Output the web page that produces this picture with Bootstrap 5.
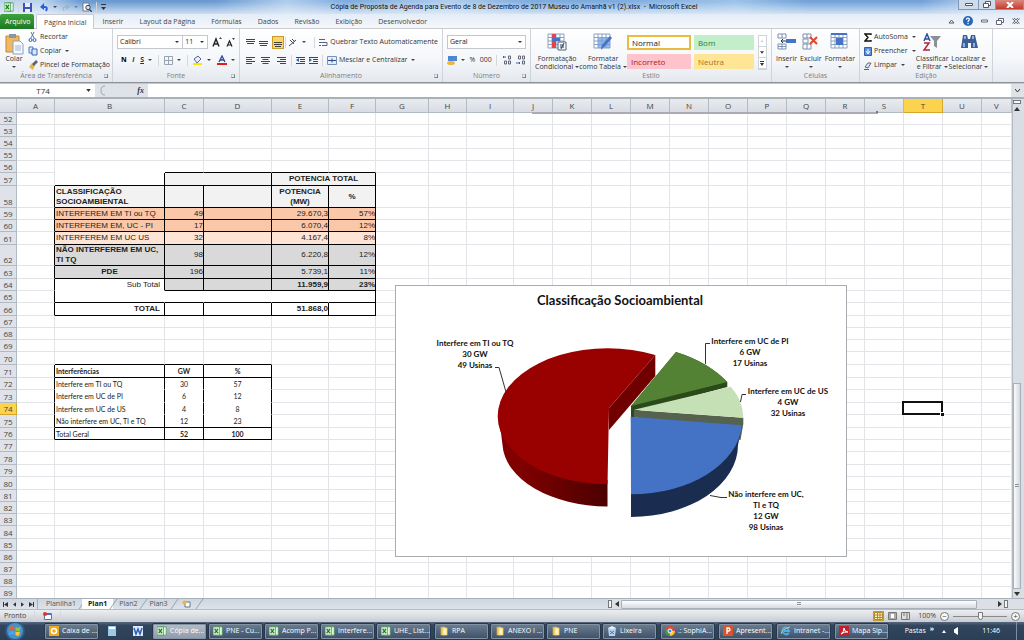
<!DOCTYPE html>
<html lang="pt-BR">
<head>
<meta charset="utf-8">
<meta name="viewport" content="width=device-width, initial-scale=1">
<title>Microsoft Excel</title>
<link rel="stylesheet" href="https://cdn.jsdelivr.net/npm/bootstrap@5.3.0/dist/css/bootstrap.min.css">
<style>
:root{--ui:"Open Sans","Noto Sans",sans-serif;--calibri:Lato,"Open Sans",sans-serif;--arial:"Liberation Sans",Arial,sans-serif}
body{font-family:var(--ui);font-size:7px;line-height:10px;color:#333;background:#dfe3e8}
button,select,input{font:inherit;color:inherit}
svg{display:block;flex:none}
.plain{border:0;background:none;padding:0;display:flex;align-items:center;gap:2px;white-space:nowrap}
.plain.stack{flex-direction:column;gap:0;line-height:8px;text-align:center;padding-top:2px}
.arr::after{content:"";display:inline-block;border:2px solid transparent;border-top-color:#444;border-bottom:0;margin-left:2px;vertical-align:1px}
.stack.below::after{margin:3px 0 0}
.vline{width:1px;height:11px;background:#d4d8dd}
.i10{width:10px;height:10px}.i20{width:20px;height:18px}

.titlebar{height:14px;position:relative;background:linear-gradient(90deg,transparent 0 4%,#3f7dc4aa 8% 21%,#9cc2e966 28%,#5d97d6aa 34%,#a8c9ec88 44%,#5d97d6aa 52% 60%,#9cc2e9 72%,#4b89cfaa 79% 90%,transparent 96%),#bdd4ee}
.titlebar::after{content:"";position:absolute;inset:0;background:linear-gradient(#fff0 10%,#e8f0f9cc)}
.titlebar>*{z-index:1}
.wintitle{font:7px/14px Roboto,var(--ui);color:#111;position:relative}
.side{flex:1 1 0;position:relative}
.winbtn{border:1px solid #8298b4;border-top:0;height:10px;padding:0;width:21px;background:#cddbeb;display:flex;align-items:center;justify-content:center}
.winbtn+.winbtn{border-left:0;width:17px}
.winbtn.close-x{width:28px;background:linear-gradient(#dc8a80,#c43a2c)}

.tabsbar{height:15px;background:linear-gradient(#e3ecf7,#f6f8fb);border-bottom:1px solid #c8ccd2}
.tabsbar .nav-link{font-size:7px;line-height:15px;padding:0 8px;color:#444;border-radius:0;height:15px}
.tabsbar .nav-link.file{background:linear-gradient(#3da33b,#1b7a24);color:#fff;padding:0 5px;border-radius:2px 2px 0 0;width:34px}
.tabsbar .nav-link.active{background:#fff;border:1px solid #c8ccd2;border-bottom:0;margin-left:2px;border-radius:2px 2px 0 0;padding:0 7px}

.ribbon{height:54px;background:linear-gradient(#fff,#f4f6f9 60%,#e4e8ee);border-bottom:1px solid #8d939b}
.grp{border-right:1px solid #cfd4da;display:flex;flex-direction:column;flex:none}
.grp .zone{height:41px;padding:2px 4px 0;display:flex}
.grp .cap{height:11px;line-height:11px;text-align:center;color:#7b8087;position:relative}
.grp .cap.corner::after{content:"";position:absolute;right:4px;top:4px;width:4px;height:4px;border:1px solid #c0c5cc;border-right-color:#788;border-bottom-color:#788}
.g1{width:113px}.g2{width:127px}.g3{width:203px}.g4{width:88px}.g5{width:241px}.g6{width:88px}.g7{width:133px}
.rows2{display:flex;flex-direction:column;gap:4px;padding-top:4px;width:100%}
.rows2>div{height:14px;display:flex;align-items:center}
.clip3{display:flex;flex-direction:column;gap:4px;padding-top:1px}
.combo{appearance:none;border:1px solid #c3c8cf;background:#fff url("data:image/svg+xml,%3Csvg xmlns='http://www.w3.org/2000/svg' width='4' height='2'%3E%3Cpath d='M0 0h4L2 2z' fill='%23333'/%3E%3C/svg%3E") no-repeat right 3px center;height:14px;padding:0 2px;border-radius:0;color:#222}
.combo.face{width:70px}.combo.size{width:26px;border-left:0}
.alignset{width:74px;display:flex;align-items:center;justify-content:space-between}
.sq{width:12px;height:13px;justify-content:center}
.on{background:#fcd364;border:1px solid #c79b2a}
.gallery{display:grid;grid-template-columns:64px 60px;gap:3px;flex:none}
.gallery button{border:0;text-align:left;padding:0 4px;font-size:8px;height:15px;line-height:15px}
.gallery .st-normal{background:#fff;border:2px solid #e9bb3e;line-height:11px;padding:0 3px;color:#222}
.st-bom{background:#c2efca;color:#2b7b35}.st-inc{background:#ffc4cb;color:#a3202b}.st-neu{background:#ffe596;color:#a8741a}
.galscroll{width:9px;height:35px;border:1px solid #cfd4da;background:#fff;display:flex;flex-direction:column}
.galscroll button{border:0;border-bottom:1px solid #cfd4da;padding:0;flex:1;background:none;display:flex;align-items:center;justify-content:center}

.fbar{height:16px;background:#dfe3e8;border-top:1px solid #c2c7cd;border-bottom:2px solid #aab0b8}
.fbar input{border:0;background:#fff;height:13px;border-radius:0}
.fbar .namebox{width:86px;text-align:center;padding:0;font-size:8px}
.fxarea{width:53px}
.fx{font:italic bold 8px/12px "Liberation Serif",serif;color:#333}

.sheetwrap{flex:1 1 0;min-height:0;overflow:hidden;display:flex}
.sheetpane{flex:1 1 0;min-width:0;overflow:hidden;position:relative;background:#fff}
.cells{table-layout:fixed;width:100%;min-width:1012px;border-collapse:separate;border-spacing:0;font-family:var(--calibri);font-size:7px;line-height:10px;color:#222}
.cells th,.cells td{padding:0;border:0 solid #e2e4e8;border-width:0 1px 1px 0;white-space:nowrap;overflow:hidden}
.cells th{background:#dfe3e9;border-color:#b4bac2;font:400 8px/10px var(--ui);color:#444;text-align:center;vertical-align:bottom}
.cells thead th{height:14px;background:linear-gradient(#e8ebef,#d9dde3);vertical-align:middle}
.cells th.sel,.cells thead th.sel{background:#fcd34d;border-color:#d5a52d}
.r12{height:12px}.r13{height:13px}.r21{height:21px}.r22{height:22px}
.w17{width:17px}.w38{width:38px}.w39{width:39px}.w47{width:47px}.w53{width:53px}.w57{width:57px}.w68{width:68px}.w110{width:110px}
.cells td.bb{border-bottom-color:#000}.cells td.br{border-right-color:#000}
.cells td.nb{border-bottom-color:#fff}.cells td.nr{border-right-color:#fff}
.cells td.ar{font-family:var(--arial);font-size:8px}
.cells td.wrapx{white-space:normal}
.cells td.tl{padding-left:1px}.cells td.tr{text-align:right}.cells td.tc{text-align:center}.cells td.pr{padding-right:4px}
.bgh{background:#f2f2f2}.bgo{background:#fac8a8}.bgl{background:#fde4d5}.bgg{background:#d9d9d9}
.cells td.cur{overflow:visible;position:relative}
.cells td.cur::before{content:"";position:absolute;inset:-2px -1px -1px -2px;border:2px solid #111}
.cells td.cur::after{content:"";position:absolute;right:-2px;bottom:-2px;width:4px;height:4px;background:#111;border:1px solid #fff;border-width:1px 0 0 1px}
.shape-edge{position:absolute;left:532px;top:13px;width:346px;height:2px;background:#a9adb3}
.shape-edge::after{content:"";position:absolute;right:0;top:-1px;width:2px;height:2px;background:#777}
.piechart{position:absolute;left:395px;top:186px;width:452px;height:272px;background:#fff;border:1px solid #a8abb0}
.piechart text{font-family:var(--calibri);font-weight:700;font-size:8px;text-anchor:middle;fill:#111}
.piechart text.head{font-size:13px}
.vbar{width:12px;background:#d9dee5;border-left:1px solid #b4bac2;display:flex;flex-direction:column;align-items:center;padding:1px 3px 0 0}
.vgap{flex:270 1 0}.hgap{flex:18 1 0}
.splitx{width:8px;height:4px;border:1px solid #777;background:#f4f6f8}
.splitx.tall{width:4px;height:8px}
.scrollarrow{border:0;background:none;padding:0;height:9px;width:9px;display:flex;align-items:center;justify-content:center}
.vthumb{width:8px;background:linear-gradient(90deg,#fafbfc,#d3d9e1);border:1px solid #a9b0ba;flex:204 1 0;display:flex;align-items:center;justify-content:center}
.grip{width:4px;height:4px;background:repeating-linear-gradient(#8a929c 0 1px,#e8ebef 1px 2px)}

.tabrow{height:11px;background:linear-gradient(#cdd5de,#dde3ea);border-top:1px solid #a9b0ba}
.navset{width:38px;padding-left:3px;padding-right:3px;border-right:1px solid #a9b0ba}
.tabrow .sheet{border:0;background:none;padding:0 6px;line-height:10px;height:10px;color:#555;position:relative}
.tabrow .sheet::after{content:"";position:absolute;right:-1px;top:0;width:1px;height:10px;background:#98a1ad;transform:skewX(-35deg)}
.tabrow .sheet:first-of-type{padding-left:8px}
.tabrow .sheet.active{background:#fff;font-weight:700;color:#222}
.hscroll{flex:0 1 416px;background:#dbe0e7;height:10px}
.hthumb{height:9px;border:1px solid #a9b0ba;background:linear-gradient(#fff,#d6dbe2);flex:357 1 0;border-radius:1px}

.statusbar{height:13px;background:linear-gradient(#eceef1,#c8ccd2);border-top:1px solid #b6bbc2;color:#444}
.zoomr{appearance:none;width:54px;height:9px;background:linear-gradient(#888,#888) center/100% 1px no-repeat}
.zoomr::-webkit-slider-thumb{appearance:none;width:5px;height:8px;background:#f4f5f7;border:1px solid #777;border-radius:0 0 3px 3px}
.rnd{width:9px;height:9px;border-radius:50%;border:1px solid #777;background:#f7f8fa;padding:0;display:flex;align-items:center;justify-content:center;line-height:6px;font-size:8px}

.taskbar{height:18px;background:linear-gradient(#56687d,#31455c 20%,#2b3f56);overflow:hidden}
.taskbar button{color:#fff}
.task{flex:0 0 55px;height:17px;border:1px solid #26384b;box-shadow:inset 0 0 0 1px #8392a4;background:linear-gradient(#6d7e91,#3c5068);border-radius:2px;padding:0 2px 0 4px;display:flex;align-items:center;gap:3px;white-space:nowrap;overflow:hidden}
.task.active{background:linear-gradient(#b4bec9,#8d9aa8)}
.tasks{gap:1px}
.tasks .last{margin-right:2px}
.orb{margin:0 17px 0 4px}
.clock{margin-right:16px}
.showdesk{width:8px;border-left:1px solid #7d8ea1!important}
</style>
</head>
<body class="vh-100 d-flex flex-column overflow-hidden">

<svg width="0" height="0" class="position-absolute" aria-hidden="true">
  <symbol id="xl" viewBox="0 0 12 12"><path d="M4 1h7v10H4z" fill="#fff" stroke="#4b9b4e"/><path d="M0 1h8v10H0z" fill="#d7efd3" stroke="#3c9a45"/><path d="M2 3.500l4 5M6 3.500l-4 5" stroke="#1f7d2c" stroke-width="1.600"/></symbol>
  <symbol id="folder" viewBox="0 0 12 12"><path d="M2 1h5l1 1v9H2z" fill="#e5b93c"/><path d="M4 2h6v9H4z" fill="#fbe38b"/><path d="M6 4h2v5H6z" fill="#fffbe0"/></symbol>
  <symbol id="up" viewBox="0 0 6 4"><path d="M0 4h6L3 0z" fill="#333"/></symbol>
  <symbol id="down" viewBox="0 0 6 4"><path d="M0 0h6L3 4z" fill="#333"/></symbol>
  <symbol id="left" viewBox="0 0 4 6"><path d="M4 0v6L0 3z" fill="#333"/></symbol>
  <symbol id="right" viewBox="0 0 4 6"><path d="M0 0v6l4-3z" fill="#333"/></symbol>
  <symbol id="gridico" viewBox="0 0 20 18"><path d="M1 1h16v14H1zM1 4.500h16M1 8h16M1 11.500h16M5 1v14M9 1v14M13 1v14" fill="#fff" stroke="#8aa0c0"/></symbol>
</svg>

<header class="titlebar d-flex flex-shrink-0">
  <div class="side d-flex align-items-center gap-1 ps-1">
    <svg class="i10"><use href="#xl"/></svg>
    <span class="vline"></span>
    <button class="plain" aria-label="Salvar"><svg width="9" height="9"><path d="M0 0h9v9H0z" fill="#3f51b5"/><path d="M2 0h5v4H2zM2 6h5v3H2z" fill="#e9eefb"/></svg></button>
    <button class="plain arr ms-1" aria-label="Desfazer"><svg width="9" height="9"><path d="M2 4h3q3 0 1 4" fill="none" stroke="#2d5bd0" stroke-width="2"/><path d="M0 4l4-4v7z" fill="#2d5bd0"/></svg></button>
    <button class="plain arr opacity-50" aria-label="Refazer"><svg width="9" height="9"><path d="M7 4H4Q1 4 3 8" fill="none" stroke="#8aa" stroke-width="1.500"/><path d="M9 4L5 1v6z" fill="#8aa"/></svg></button>
    <button class="plain" aria-label="Visualizar impressão"><svg class="i10"><path d="M1 1h6v8H1z" fill="#fff" stroke="#778"/><circle cx="6" cy="5.500" r="2.200" fill="#cfe4fb" stroke="#345"/><path d="M7.500 7.500L10 10" stroke="#345" stroke-width="1.500"/></svg></button>
    <span class="vline"></span>
    <button class="plain" aria-label="Personalizar"><svg width="5" height="6"><path d="M0 0h5v1H0zM0 3h5L2.500 6z" fill="#333"/></svg></button>
  </div>
  <div class="wintitle text-nowrap">Cópia de Proposta de Agenda para Evento de 8 de Dezembro de 2017 Museu do Amanhã v1 (2).xlsx &nbsp;- &nbsp;Microsoft Excel</div>
  <div class="side d-flex justify-content-end">
    <button class="winbtn" aria-label="Minimizar"><svg width="8" height="3"><path d="M.5.500h7v2h-7z" fill="#fff" stroke="#556"/></svg></button>
    <button class="winbtn" aria-label="Restaurar"><svg width="8" height="7"><path d="M2.500.500h5v4h-5z" fill="#fff" stroke="#556"/><path d="M.5 2.500h5v4h-5z" fill="#fff" stroke="#556"/></svg></button>
    <button class="winbtn close-x" aria-label="Fechar"><svg width="8" height="6"><path d="M1 0l6 6M7 0L1 6" stroke="#fff" stroke-width="2"/></svg></button>
  </div>
</header>

<nav class="tabsbar d-flex align-items-start justify-content-between flex-shrink-0">
  <div class="nav flex-nowrap text-nowrap">
    <a class="nav-link file" href="#">Arquivo</a>
    <a class="nav-link active" href="#">Página Inicial</a>
    <a class="nav-link" href="#">Inserir</a>
    <a class="nav-link" href="#">Layout da Página</a>
    <a class="nav-link" href="#">Fórmulas</a>
    <a class="nav-link" href="#">Dados</a>
    <a class="nav-link" href="#">Revisão</a>
    <a class="nav-link" href="#">Exibição</a>
    <a class="nav-link" href="#">Desenvolvedor</a>
  </div>
  <div class="d-flex align-items-center gap-2 h-100 pe-1">
    <button class="plain" aria-label="Minimizar faixa"><svg width="7" height="5"><path d="M1 4l2.500-3L6 4z" fill="#fff" stroke="#556"/></svg></button>
    <button class="plain" aria-label="Ajuda"><svg class="i10"><circle cx="5" cy="5" r="5" fill="#2467b8"/><path d="M3.300 3.700Q3.600 2 5.200 2.200q1.700.5.900 1.900Q5 4.700 5 6.200M5 7v1.300" fill="none" stroke="#fff" stroke-width="1.200"/></svg></button>
    <button class="plain" aria-label="Minimizar pasta"><svg width="7" height="4"><path d="M.5 1h6v2h-6z" fill="#fff" stroke="#667"/></svg></button>
    <button class="plain" aria-label="Restaurar pasta"><svg width="8" height="7"><path d="M2.500.500h5v4h-5z" fill="#fff" stroke="#667"/><path d="M.5 2.500h5v4h-5z" fill="#fff" stroke="#667"/></svg></button>
    <button class="plain" aria-label="Fechar pasta"><svg width="8" height="6"><path d="M1 0l6 6M7 0L1 6" stroke="#667" stroke-width="2.200"/><path d="M1 0l6 6M7 0L1 6" stroke="#fff" stroke-width=".8"/></svg></button>
  </div>
</nav>

<section class="ribbon d-flex flex-shrink-0 overflow-hidden">
  <div class="grp g1">
    <div class="zone gap-1">
      <button class="plain stack arr below"><svg width="20" height="22" viewBox="0 0 20 22"><path d="M2 3h13v16H2z" fill="#f0b860" stroke="#c08a3a"/><path d="M5 1h7v4H5z" fill="#8a96a8"/><path d="M9 8h7l3 3v10H9z" fill="#f6f9ff" stroke="#8aa0c0"/><path d="M11 13h6M11 15h6M11 17h6" stroke="#9fb4d8"/></svg>Colar</button>
      <div class="clip3">
        <button class="plain"><svg class="i10"><path d="M3 0l3 6M6 0L3 6" stroke="#678" fill="none"/><circle cx="2.500" cy="8" r="1.500" fill="none" stroke="#2a62c4"/><circle cx="6.500" cy="8" r="1.500" fill="none" stroke="#2a62c4"/></svg>Recortar</button>
        <button class="plain arr"><svg class="i10"><path d="M1 1h4v6H1z" fill="#dbe8fb" stroke="#4a7cc8"/><path d="M4 3h5v6H4z" fill="#dbe8fb" stroke="#3465b8"/></svg>Copiar</button>
        <button class="plain"><svg class="i10"><path d="M1 7l3-4 3 2-2 5z" fill="#e9b53c"/><path d="M4 4l4-4 2 2-4 4z" fill="#5a6478"/></svg>Pincel de Formatação</button>
      </div>
    </div>
    <div class="cap corner">Área de Transferência</div>
  </div>
  <div class="grp g2">
    <div class="zone"><div class="rows2">
      <div>
        <select class="combo face" aria-label="Fonte"><option>Calibri</option></select>
        <select class="combo size" aria-label="Tamanho"><option>11</option></select>
        <button class="plain ms-1" aria-label="Aumentar fonte"><svg width="10" height="10"><path d="M1 9.500L4 2l3 7.500M2 7h4" fill="none" stroke="#222" stroke-width="1.400"/><path d="M7 2h3L8.500 0z" fill="#345"/></svg></button>
        <button class="plain ms-1" aria-label="Diminuir fonte"><svg width="9" height="10"><path d="M1 9.500L3.500 4 6 9.500M2 8h3" fill="none" stroke="#222" stroke-width="1.200"/><path d="M6 1h3L7.500 3z" fill="#345"/></svg></button>
      </div>
      <div class="justify-content-between ps-1">
        <button class="plain fw-bold text-black">N</button>
        <button class="plain fst-italic fw-bold">I</button>
        <button class="plain arr fw-bold"><u>S</u></button>
        <span class="vline"></span>
        <button class="plain arr" aria-label="Bordas"><svg width="9" height="9"><path d="M.5.500h8v8h-8zM4.500 0v9M0 4.500h9" fill="none" stroke="#9aa3b0"/></svg></button>
        <span class="vline"></span>
        <button class="plain arr" aria-label="Preenchimento"><svg class="i10"><path d="M1 4l4-3 3 3-4 4z" fill="#e8eef8" stroke="#568"/><path d="M0 8h9v2H0z" fill="#ffe600"/></svg></button>
        <button class="plain arr" aria-label="Cor da fonte"><svg class="i10"><path d="M2 7L5 1l3 6M3 5h4" fill="none" stroke="#2a4a90" stroke-width="1.300"/><path d="M0 8h10v2H0z" fill="#e31b1b"/></svg></button>
      </div>
    </div></div>
    <div class="cap corner">Fonte</div>
  </div>
  <div class="grp g3">
    <div class="zone"><div class="rows2">
      <div class="gap-1">
        <div class="alignset">
          <button class="plain sq" aria-label="Superior"><svg width="9" height="9"><path d="M0 1.500h9M0 3.500h9M1 5.500h7" stroke="#444"/></svg></button>
          <button class="plain sq" aria-label="Meio"><svg width="9" height="9"><path d="M0 3.500h9M0 5.500h9M1 7.500h7" stroke="#444"/></svg></button>
          <button class="plain sq on" aria-label="Inferior"><svg width="8" height="9"><path d="M0 4.500h8M0 6.500h8M1 8.500h6" stroke="#444"/></svg></button>
          <span class="vline"></span>
          <button class="plain arr me-1" aria-label="Orientação"><svg width="10" height="9"><path d="M1 8L8 2M2 2l4 4M4 1l3 3" stroke="#445" fill="none"/></svg></button>
        </div>
        <span class="vline"></span>
        <button class="plain"><svg width="9" height="9"><path d="M0 1.500h6M0 4.500h8v3H3M0 7.500h2" stroke="#56657c" fill="none"/></svg>Quebrar Texto Automaticamente</button>
      </div>
      <div class="gap-1">
        <div class="alignset">
          <button class="plain sq" aria-label="Esquerda"><svg width="9" height="9"><path d="M0 1.500h9M0 3.500h6M0 5.500h9M0 7.500h6" stroke="#444"/></svg></button>
          <button class="plain sq" aria-label="Centro"><svg width="9" height="9"><path d="M0 1.500h9M1.500 3.500h6M0 5.500h9M1.500 7.500h6" stroke="#444"/></svg></button>
          <button class="plain sq" aria-label="Direita"><svg width="9" height="9"><path d="M0 1.500h9M3 3.500h6M0 5.500h9M3 7.500h6" stroke="#444"/></svg></button>
          <span class="vline"></span>
          <button class="plain" aria-label="Menos recuo"><svg width="9" height="9"><path d="M0 1.500h9M4 3.500h5M4 5.500h5M0 7.500h9" stroke="#444"/><path d="M3 2v4L0 4z" fill="#2a62c4"/></svg></button>
          <button class="plain" aria-label="Mais recuo"><svg width="9" height="9"><path d="M0 1.500h9M4 3.500h5M4 5.500h5M0 7.500h9" stroke="#444"/><path d="M0 2v4l3-2z" fill="#2a62c4"/></svg></button>
        </div>
        <span class="vline"></span>
        <button class="plain arr"><svg width="10" height="9"><path d="M.5.500h9v8h-9z" fill="#e4edf9" stroke="#7790b4"/><path d="M1 4.500h8M5 2.500v4" stroke="#2a4a90"/></svg>Mesclar e Centralizar</button>
      </div>
    </div></div>
    <div class="cap corner">Alinhamento</div>
  </div>
  <div class="grp g4">
    <div class="zone"><div class="rows2">
      <div><select class="combo w-100" aria-label="Formato de número"><option>Geral</option></select></div>
      <div class="justify-content-between">
        <button class="plain arr" aria-label="Moeda"><svg class="i10"><path d="M1 1h9v5H1z" fill="#4d86d6"/><ellipse cx="4" cy="8" rx="4" ry="2" fill="#e8b93a"/></svg></button>
        <button class="plain">%</button>
        <button class="plain">000</button>
        <span class="vline"></span>
        <button class="plain" aria-label="Aumentar casas"><svg class="i10"><path d="M4 2H1l1-1M1 2l1 1" stroke="#2a62c4" fill="none"/><path d="M6.500 1h2v3h-2zM2.500 6h2v3h-2zM6.500 6h2v3h-2z" fill="none" stroke="#667"/></svg></button>
        <button class="plain" aria-label="Diminuir casas"><svg class="i10"><path d="M0 8h4L3 7m1 1L3 9" stroke="#2a62c4" fill="none"/><path d="M2.500 1h2v3h-2zM6.500 1h2v3h-2zM6.500 6h2v3h-2z" fill="none" stroke="#667"/></svg></button>
      </div>
    </div></div>
    <div class="cap corner">Número</div>
  </div>
  <div class="grp g5">
    <div class="zone">
      <button class="plain stack"><svg class="i20 mb-1" viewBox="0 0 20 18"><use href="#gridico"/><path d="M5 1h4v14H5z" fill="#e2454d"/><path d="M5 5h8v3H5z" fill="#4672c8"/><path d="M11 9h8v8h-8z" fill="#f4f6fa" stroke="#567"/><path d="M13 12h4M13 14h4M17 10l-3 6" stroke="#345"/></svg>Formatação<span class="arr">Condicional</span></button>
      <button class="plain stack"><svg class="i20 mb-1" viewBox="0 0 20 18"><use href="#gridico"/><path d="M5 5h12v10H5z" fill="#6d9de0" opacity=".7"/><path d="M19 5l-7 8-4 4 1-5 8-9z" fill="#4672c8"/></svg>Formatar<span class="arr">como Tabela</span></button>
      <div class="gallery pt-1">
        <button class="st-normal">Normal</button><button class="st-bom">Bom</button>
        <button class="st-inc">Incorreto</button><button class="st-neu">Neutra</button>
      </div>
      <div class="galscroll mt-1 ms-1">
        <button aria-label="Acima"><svg width="4" height="2" class="opacity-25"><use href="#up"/></svg></button>
        <button aria-label="Abaixo"><svg width="4" height="3"><use href="#down"/></svg></button>
        <button aria-label="Mais"><svg width="4" height="5"><path d="M0 0h4v1H0zM0 2h4L2 5z" fill="#333"/></svg></button>
      </div>
    </div>
    <div class="cap">Estilo</div>
  </div>
  <div class="grp g6">
    <div class="zone justify-content-between">
      <button class="plain stack arr below"><svg class="i20 mb-1"><path d="M1 1h8v4H1zM5 1v4M1 11h8v5H1zM5 11v5M1 13.500h8" fill="#fff" stroke="#7d90ad"/><path d="M9 6h10v4H9z" fill="#4672c8"/><path d="M4 8h5M6 6L4 8l2 2" stroke="#234" fill="none"/></svg>Inserir</button>
      <button class="plain stack arr below"><svg class="i20 mb-1"><path d="M2 1h8v4H2zM6 1v4M2 11h8v5H2zM6 11v5M2 6h5v4H2z" fill="#fff" stroke="#7d90ad"/><path d="M9 4l7 7M16 4l-7 7" stroke="#e0452e" stroke-width="2"/></svg>Excluir</button>
      <button class="plain stack arr below"><svg class="i20 mb-1"><use href="#gridico"/><path d="M6 5h7v7H6z" fill="#4672c8"/><path d="M1 1h16" stroke="#4672c8" stroke-width="2"/></svg>Formatar</button>
    </div>
    <div class="cap">Células</div>
  </div>
  <div class="grp g7">
    <div class="zone justify-content-between">
      <div class="clip3">
        <button class="plain arr"><svg width="8" height="9"><path d="M7 2V1H1l3 3.500L1 8h6V7" fill="none" stroke="#111" stroke-width="1.400"/></svg>AutoSoma</button>
        <button class="plain arr"><svg width="8" height="9"><path d="M.5.500h7v8h-7z" fill="#5a8fdc" stroke="#345fa8"/><path d="M4 2v4M2 4l2 3 2-3" stroke="#fff" fill="none"/></svg>Preencher</button>
        <button class="plain arr"><svg width="8" height="9"><path d="M1 6l3-4h3L4 7z" fill="#e8eef8" stroke="#568"/><path d="M0 8.500h5" stroke="#36c"/></svg>Limpar</button>
      </div>
      <button class="plain stack"><svg class="i20 mb-1"><path d="M2 8l3-7 3 7M3 6h4" fill="none" stroke="#2d4f9e" stroke-width="1.500"/><path d="M2 10h5l-5 7h6" fill="none" stroke="#b3263a" stroke-width="1.500"/><path d="M8 3h11l-4 5v7l-3-2V8z" fill="#8b8f96"/></svg>Classificar<span class="arr">e Filtrar</span></button>
      <button class="plain stack"><svg class="i20 mb-1"><path d="M4 2h4l1 4h2l1-4h4l3 13h-7v-5H9v5H2z" fill="#3e5f96"/><path d="M5 3h2v3H5zM13 3h2v3h-2zM4 10h2v4H4zM14 10h2v4h-2z" fill="#8fb0e0"/></svg>Localizar e<span class="arr">Selecionar</span></button>
    </div>
    <div class="cap">Edição</div>
  </div>
</section>

<div class="fbar d-flex flex-shrink-0">
  <input class="namebox" value="T74" aria-label="Caixa de nome">
  <button class="plain bg-white pe-1" aria-label="Nomes"><svg width="5" height="3"><use href="#down"/></svg></button>
  <div class="fxarea d-flex justify-content-between align-items-center px-1"><svg width="8" height="11"><path d="M6 1Q2 1 2 5.500T6 10" fill="none" stroke="#9aa3ad"/></svg><label class="fx" for="formula">fx</label></div>
  <input class="flex-grow-1" id="formula" value="">
  <button class="plain px-1" aria-label="Expandir"><svg width="5" height="4"><path d="M0 0l2.500 3L5 0" fill="none" stroke="#333"/></svg></button>
</div>

<main class="sheetwrap">
  <div class="sheetpane">
    <table class="cells">
      <colgroup><col class="w17"><col class="w38"><col class="w110"><col class="w39"><col class="w68"><col class="w57"><col class="w47"><col class="w53"><col class="w38"><col class="w47"><col class="w39"><col class="w39"><col class="w39"><col class="w39"><col class="w39"><col class="w39"><col class="w39"><col class="w39"><col class="w39"><col class="w39"><col class="w39"><col class="w39"><col></colgroup>
      <thead></thead>
      <tbody></tbody>
    </table>
    <div class="shape-edge"></div>
    <svg class="piechart" viewBox="396 286 450 270" role="img" aria-label="Classificação Socioambiental">
      <defs>
        <linearGradient id="redside"><stop offset=".2" stop-color="#800000"/><stop offset="1" stop-color="#4c0000"/></linearGradient>
      </defs>
      <text class="head" x="620" y="305">Classificação Socioambiental</text>
      <path d="M499 416L502.500 445A106 64 0 0 0 607.500 506.500V480Z" fill="url(#redside)"/>
      <path d="M609 408L655.300 355V376L609 430Z" fill="#700000"/>
      <path d="M609 408L655.300 355A110 68 0 1 0 607.500 484.300Z" fill="#990000"/>
      <path d="M631 406L676 352Q708 362 727.300 382V387L634 412V417H631Z" fill="#2a4a1a"/>
      <path d="M631 406L676 352Q708 362 727.300 382Z" fill="#548235"/>
      <path d="M634 410L743.300 417.700V424L740.500 440L634 417Z" fill="#55634e"/>
      <path d="M634 409.700L730.700 386.700Q743 400 743.300 417.700Z" fill="#c5e0b4"/>
      <path d="M742 425L738 445A107 72 0 0 1 631 517V490Z" fill="#1a2c50"/>
      <path d="M630.700 416.700L742 425.300A111 74 0 0 1 631 494.300Z" fill="#4472c4"/>
      <path d="M495 367.500h4L506 392M710 343.500h-4.500V364M746 394.500h-4L740.500 402M727 497.500H721L710 495.500" fill="none" stroke="#333"/>
      <text x="475" y="346">Interfere em TI ou TQ</text><text x="475" y="357">30 GW</text><text x="475" y="368">49 Usinas</text>
      <text x="750" y="344">Interfere em UC de PI</text><text x="750" y="355">6 GW</text><text x="750" y="366">17 Usinas</text>
      <text x="788" y="394">Interfere em UC de US</text><text x="788" y="405">4 GW</text><text x="788" y="416">32 Usinas</text>
      <text x="766" y="497">Não interfere em UC,</text><text x="766" y="508">TI e TQ</text><text x="766" y="519">12 GW</text><text x="766" y="530">98 Usinas</text>
    </svg>
  </div>
  <div class="vbar">
    <div class="splitx"></div>
    <button class="scrollarrow" aria-label="Para cima"><svg width="6" height="4"><use href="#up"/></svg></button>
    <div class="vgap"></div>
    <div class="vthumb"><span class="grip"></span></div>
    <button class="scrollarrow" aria-label="Para baixo"><svg width="6" height="4"><use href="#down"/></svg></button>
  </div>
</main>

<div class="tabrow d-flex flex-shrink-0 justify-content-between">
  <div class="d-flex">
    <div class="navset d-flex align-items-center justify-content-between">
      <button class="plain" aria-label="Primeira"><svg width="5" height="5"><path d="M0 0h1v5H0zM5 0v5L1 2.500z" fill="#333"/></svg></button>
      <button class="plain" aria-label="Anterior"><svg width="3" height="5"><use href="#left"/></svg></button>
      <button class="plain" aria-label="Próxima"><svg width="3" height="5"><use href="#right"/></svg></button>
      <button class="plain" aria-label="Última"><svg width="5" height="5"><path d="M4 0h1v5H4zM0 0v5l4-2.500z" fill="#333"/></svg></button>
    </div>
    <button class="sheet">Planilha1</button><button class="sheet active">Plan1</button><button class="sheet">Plan2</button><button class="sheet">Plan3</button>
    <button class="sheet px-2" aria-label="Inserir planilha"><svg width="9" height="8"><path d="M3 2h5v5H3z" fill="#fff" stroke="#678"/><circle cx="2.500" cy="2.500" r="2" fill="#eeb33a"/></svg></button>
  </div>
  <div class="hscroll d-flex align-items-center">
    <span class="splitx tall"></span>
    <button class="scrollarrow" aria-label="Para a esquerda"><svg width="4" height="6"><use href="#left"/></svg></button>
    <div class="hthumb d-flex justify-content-center align-items-center"><span class="grip"></span></div>
    <div class="hgap"></div>
    <button class="scrollarrow" aria-label="Para a direita"><svg width="4" height="6"><use href="#right"/></svg></button>
    <span class="splitx tall me-3"></span>
  </div>
</div>

<div class="statusbar d-flex flex-shrink-0 justify-content-between align-items-center px-1">
  <div class="d-flex align-items-center gap-2"><span>Pronto</span><span class="vline"></span><svg width="9" height="8"><path d="M1.500 1.500h7v6h-7z" fill="#fff" stroke="#678"/><path d="M1 1h7v2H1z" fill="#4672c8"/><circle cx="2" cy="2" r="2" fill="#d33"/></svg><span class="vline"></span></div>
  <div class="d-flex align-items-center gap-1">
    <button class="plain on" aria-label="Normal"><svg width="9" height="8"><path d="M.5.500h8v7h-8zM3.500 0v8M6 0v8M0 3h9M0 5.500h9" fill="#fff3c4" stroke="#b08a2a"/></svg></button>
    <button class="plain" aria-label="Layout"><svg width="9" height="8"><path d="M.5.500h8v7h-8z" fill="#aaa" stroke="#777"/><path d="M3 2h3v4H3z" fill="#fff"/></svg></button>
    <button class="plain" aria-label="Quebras"><svg width="9" height="8"><path d="M.5.500h8v7h-8zM3 0v4M6 0v8" fill="#ddd" stroke="#777"/></svg></button>
    <label class="ms-1" for="zoom">100%</label>
    <button class="rnd" aria-label="Menos zoom">−</button>
    <input type="range" class="zoomr m-0" id="zoom" value="50">
    <button class="rnd" aria-label="Mais zoom">+</button>
  </div>
</div>

<footer class="taskbar d-flex flex-shrink-0 justify-content-between align-items-center">
  <div class="d-flex align-items-center tasks">
    <button class="plain orb" aria-label="Iniciar"><svg width="22" height="18"><circle cx="11" cy="9" r="10" fill="#2b5c8c"/><circle cx="11" cy="9" r="8" fill="#4c8fc4"/><path d="M6 5q2-1.500 4.500 0v3.500q-2.500-1-5 0z" fill="#e8622c"/><path d="M11.500 5q2.500 1 5 0l-.8 4q-2 .8-4.200-.4z" fill="#8cc63f"/><path d="M5.500 9.500q2.500-1 5 0V13q-2.500-1.500-5 0z" fill="#3fa9f5"/><path d="M11.500 9.500q2 1 4.500 0l-.8 4q-2 .8-3.700-.4z" fill="#fdc82f"/></svg></button>
    <button class="task"><svg class="i10"><path d="M0 0h10v10H0z" fill="#f0a81c"/><circle cx="5" cy="5" r="2.500" fill="none" stroke="#fff" stroke-width="1.500"/></svg>Caixa de ...</button>
    <button class="plain ms-2 me-3" aria-label="Calculadora"><svg width="8" height="10"><path d="M0 0h8v10H0z" fill="#9cc8ea"/><path d="M1 1h6v2H1z" fill="#fff"/></svg></button>
    <button class="plain me-2" aria-label="Word"><svg class="i10"><path d="M0 0h10v10H0z" fill="#dfe9f8"/><path d="M1 2l2 6 2-5 2 5 2-6" fill="none" stroke="#2a5cb8" stroke-width="1.500"/></svg></button>
    <button class="task active"><svg class="i10"><use href="#xl"/></svg>Cópia de...</button>
    <button class="task"><svg class="i10"><use href="#xl"/></svg>PNE - Cu...</button>
    <button class="task"><svg class="i10"><use href="#xl"/></svg>Acomp P...</button>
    <button class="task"><svg class="i10"><use href="#xl"/></svg>Interfere...</button>
    <button class="task last"><svg class="i10"><use href="#xl"/></svg>UHE_ List...</button>
    <button class="task"><svg class="i10"><use href="#folder"/></svg>RPA</button>
    <button class="task"><svg class="i10"><use href="#folder"/></svg>ANEXO I ...</button>
    <button class="task"><svg class="i10"><use href="#folder"/></svg>PNE</button>
    <button class="task last"><svg class="i10"><path d="M1 2h8L8 10H2z" fill="#b9d4ec"/><path d="M1 2l4-2 4 2-4 1z" fill="#e8f2fb"/><path d="M3 5l4 3M7 5L3 8" stroke="#3a78c8"/></svg>Lixeira</button>
    <button class="task last"><svg class="i10"><circle cx="5" cy="5" r="5" fill="#dd4b39"/><path d="M5 5L.7 2.500A5 5 0 0 0 5 10z" fill="#2fa24a"/><path d="M5 5h5a5 5 0 0 1-5 5z" fill="#fbcb2e"/><circle cx="5" cy="5" r="2" fill="#3f7de8" stroke="#fff"/></svg>.: SophiA...</button>
    <button class="task last"><svg class="i10"><path d="M0 0h10v10H0z" fill="#d9532c"/><path d="M4 8V2h2q2 2 0 3H4" fill="none" stroke="#fff" stroke-width="1.300"/></svg>Apresent...</button>
    <button class="task last"><svg class="i10"><path d="M8 7Q5 10 2.500 7t.5-5 5 3H3" fill="none" stroke="#49b3f0" stroke-width="1.800"/><path d="M0 8Q1 3 9 1" fill="none" stroke="#f4c430"/></svg>Intranet -...</button>
    <button class="task"><svg class="i10"><path d="M0 0h10v10H0z" fill="#c3202b"/><path d="M2 8q3-2 3-6 0 4 4 4Q5 5.500 2 8z" fill="none" stroke="#fff"/></svg>Mapa Sip...</button>
  </div>
  <div class="d-flex align-items-center text-white h-100">
    <span>Pastas</span><span class="ms-1 mb-1 fw-bold">»</span>
    <svg class="ms-2" width="4" height="3"><path d="M0 3h4L2 0z" fill="#fff"/></svg>
    <svg class="ms-2 me-4" width="4" height="8"><path d="M0 2.500L4 0v8L0 5.500z" fill="#fff"/></svg>
    <span class="clock">11:46</span>
    <button class="plain showdesk h-100" aria-label="Mostrar área de trabalho"></button>
  </div>
</footer>

<script src="https://cdn.jsdelivr.net/npm/bootstrap@5.3.0/dist/js/bootstrap.bundle.min.js"></script>
<script>
const cols = [...'ABCDEFGHIJKLMNOPQRSTUV'];
const tall = {58: 'r22', 62: 'r21'};
const r13 = [57, 61, 63, 66, 70, 71, 73, 75, 78, 80, 84];
// Each cell: [text, classes, colspan]
const data = {
  56: {B: ['', 'nb nr'], C: ['', 'bb'], D: ['', 'bb'], E: ['', 'bb'], F: ['', 'bb']},
  57: {B: ['', 'bb br'], C: ['', 'bb br bgh', 2], E: ['POTENCIA TOTAL', 'bb br bgh ar tc fw-bold', 2]},
  58: {A: ['', 'br'], B: ['CLASSIFICAÇÃO SOCIOAMBIENTAL', 'bb br bgh ar tl wrapx fw-bold'], C: ['', 'bb br bgh'], D: ['', 'bb br bgh'], E: ['POTENCIA (MW)', 'bb br bgh ar tc wrapx fw-bold'], F: ['%', 'bb br bgh ar tc fw-bold align-middle']},
  65: {A: ['', 'br'], B: ['', 'bb nr'], C: ['', 'bb nr'], D: ['', 'bb nr'], E: ['', 'bb nr'], F: ['', 'bb br']},
};
function first(row, label, lc, c, e, f, bg, num) {
  const k = 'bb br ar tr align-middle ' + bg;
  data[row] = {A: ['', 'br'], B: [label, 'ar ' + lc], C: [c, k], D: ['', k], E: [e, k + ' ' + num], F: [f, k + ' ' + num]};
}
first(59, 'INTERFEREM EM TI ou TQ', 'bb br tl bgo', '49', '29.670,3', '57%', 'bgo', '');
first(60, 'INTERFEREM EM, UC - PI', 'bb br tl bgo', '17', '6.070,4', '12%', 'bgo', '');
first(61, 'INTERFEREM EM UC US', 'bb br tl bgl', '32', '4.167,4', '8%', 'bgl', '');
first(62, 'NÃO INTERFEREM EM UC, TI TQ', 'bb br tl bgg wrapx fw-bold', '98', '6.220,8', '12%', 'bgg', '');
first(63, 'PDE', 'bb br tc bgg fw-bold', '196', '5.739,1', '11%', 'bgg', '');
first(64, 'Sub Total', 'nb br tr pr', '', '11.959,9', '23%', 'bgg', 'fw-bold');
first(66, 'TOTAL', 'bb br tr pr fw-bold', '', '51.868,0', '', '', 'fw-bold');
data[70] = {B: ['', 'bb'], C: ['', 'bb'], D: ['', 'bb']};
[[71, 'Interferências', 'GW', '%', 'bb fw-bold', 'fw-bold'], [72, 'Interfere em TI ou TQ', 30, 57, 'nb', ''],
 [73, 'Interfere em UC de PI', 6, 12, 'nb', ''], [74, 'Interfere em UC de US', 4, 8, 'nb', ''],
 [75, 'Não interfere em UC, TI e TQ', 12, 23, 'bb', ''], [76, 'Total Geral', 52, 100, 'bb', 'fw-bold']]
.forEach(([r, t, g, p, k, n]) => data[r] = {A: ['', 'br'], B: [t, 'tl br ' + k], C: [g, 'tc br ' + k + ' ' + n], D: [p, 'tc br ' + k + ' ' + n]});
data[74].T = ['', 'cur'];

document.querySelector('.cells thead').innerHTML = '<tr><th></th>' + cols.map(c => `<th scope="col" class="${c === 'T' ? 'sel' : ''}">${c}</th>`).join('') + '</tr>';
let html = '';
for (let r = 52; r <= 89; r++) {
  html += `<tr class="${tall[r] || (r13.includes(r) ? 'r13' : 'r12')}"><th scope="row" class="${r === 74 ? 'sel' : ''}">${r}</th>`;
  for (let i = 0; i < cols.length; i++) {
    const [t, k, span] = (data[r] || {})[cols[i]] || ['', ''];
    html += `<td class="${k}"${span ? ` colspan="${span}"` : ''}>${t}</td>`;
    if (span) i += span - 1;
  }
  html += '</tr>';
}
document.querySelector('.cells tbody').innerHTML = html;
</script>
</body>
</html>
